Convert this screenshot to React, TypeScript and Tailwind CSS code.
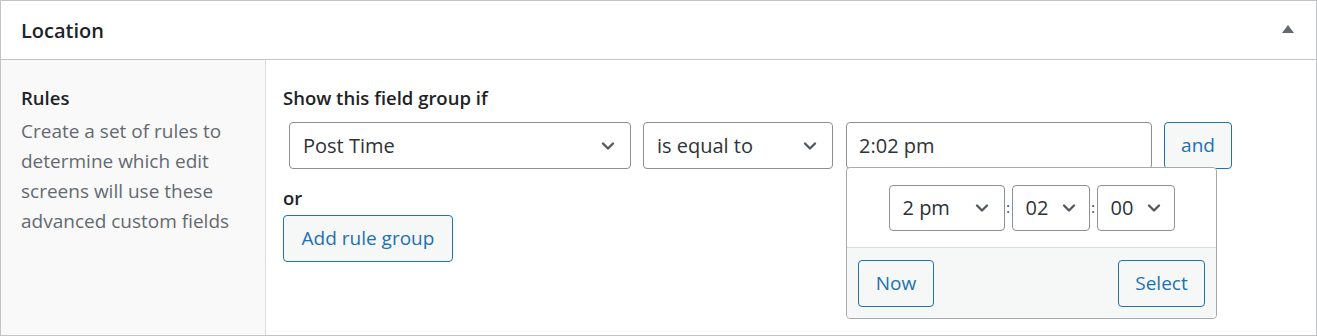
import { ChevronDown } from "lucide-react";

const font = { fontFamily: '"Open Sans", "Noto Sans", sans-serif' };

function Select({ label, className }: { label: string; className: string }) {
  return (
    <div
      className={`flex items-center justify-between rounded-[4px] border border-[#8c8f94] bg-white text-[#2c3338] ${className}`}
    >
      <span>{label}</span>
      <ChevronDown size={20} strokeWidth={2.8} className="text-[#50575e]" />
    </div>
  );
}

function Button({ label, className }: { label: string; className: string }) {
  return (
    <button
      className={`flex items-center justify-center rounded-[4px] border border-[#2271b1] bg-[#f6f7f7] text-[19px] text-[#2271b1] ${className}`}
    >
      {label}
    </button>
  );
}

export default function App() {
  return (
    <div className="h-[336px] w-[1317px] bg-white" style={font}>
      <div className="flex h-[336px] flex-col border border-[#c3c4c7]">
        <div className="flex h-[59px] shrink-0 items-center justify-between border-b border-[#c3c4c7] px-5">
          <span className="mt-[2px] text-[20px] font-semibold text-[#1d2327]">Location</span>
          <span className="mr-[2px] mt-[-2px] h-0 w-0 border-x-[6px] border-b-[8px] border-x-transparent border-b-[#646970]" />
        </div>
        <div className="flex flex-1">
          <div className="w-[265px] shrink-0 border-r border-[#dcdcde] bg-[#f9f9f9] px-5 pt-[25px]">
            <div className="text-[18.5px] font-semibold leading-[26px] text-[#1d2327]">Rules</div>
            <p className="mt-[5px] text-[19px] leading-[30px] text-[#646970]">
              Create a set of rules to determine which edit screens will use these advanced custom fields
            </p>
          </div>
          <div className="relative flex-1 pl-[17px] pt-[25px]">
            <div className="text-[18.5px] font-semibold leading-[26px] text-[#1d2327]">Show this field group if</div>
            <div className="mt-[11px] flex items-center pl-[6px] text-[20px]">
              <Select label="Post Time" className="h-[47px] w-[342px] pl-[13px] pr-[12px]" />
              <Select label="is equal to" className="ml-[12px] h-[47px] w-[190px] pl-[13px] pr-[12px]" />
              <div className="ml-[13px] flex h-[47px] w-[306px] items-center rounded-[4px] border border-[#8c8f94] bg-white pl-[12px] text-[#2c3338]">
                2:02 pm
              </div>
              <Button label="and" className="ml-[12px] h-[47px] w-[68px]" />
            </div>
            <div className="mt-[16px] text-[18.5px] font-semibold leading-[26px] text-[#1d2327]">or</div>
            <Button label="Add rule group" className="mt-[4px] h-[47px] w-[170px]" />

            <div className="absolute left-[580px] top-[107px] w-[371px] rounded-[4px] border border-[#a7aaad] bg-white">
              <div className="flex h-[79px] items-center justify-center text-[20px] text-[#2c3338]">
                <Select label="2 pm" className="h-[46px] w-[116px] pl-[13px] pr-[12px]" />
                <span className="w-[7px] text-center text-[14px]">:</span>
                <Select label="02" className="h-[46px] w-[78px] pl-[13px] pr-[10px]" />
                <span className="w-[7px] text-center text-[14px]">:</span>
                <Select label="00" className="h-[46px] w-[78px] pl-[13px] pr-[10px]" />
              </div>
              <div className="flex h-[71px] items-center justify-between rounded-b-[4px] border-t border-[#dcdcde] bg-[#f6f7f7] px-[11px]">
                <Button label="Now" className="h-[47px] w-[76px]" />
                <Button label="Select" className="h-[47px] w-[87px]" />
              </div>
            </div>
          </div>
        </div>
      </div>
    </div>
  );
}
